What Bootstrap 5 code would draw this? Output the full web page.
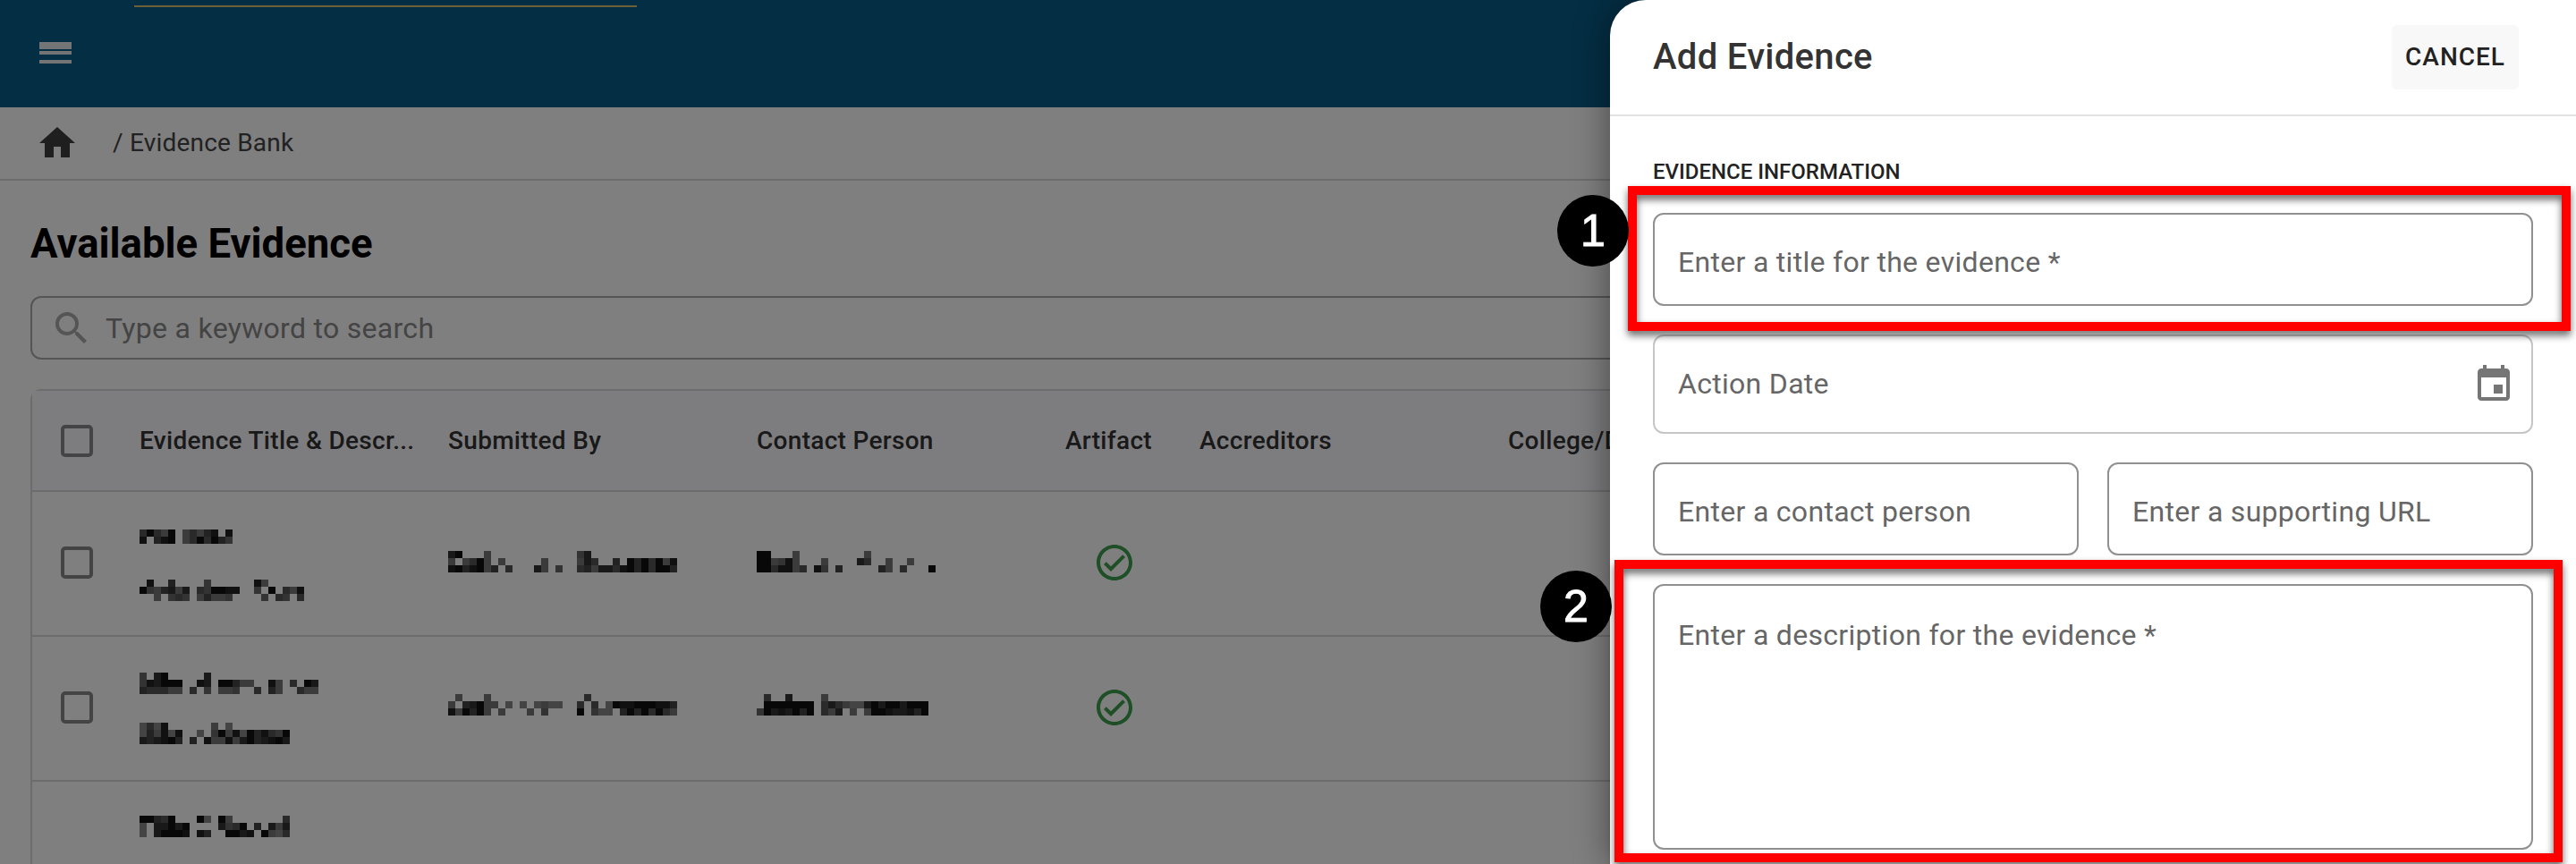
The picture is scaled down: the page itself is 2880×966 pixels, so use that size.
<!DOCTYPE html>
<html lang="en">
<head>
    <meta charset="UTF-8">
    <meta name="viewport" content="width=device-width, initial-scale=1.0">
    <title>Evidence Bank</title>

    <!-- BOOTSTRAP -->
    <link href="https://cdn.jsdelivr.net/npm/bootstrap@5.3.2/dist/css/bootstrap.min.css" rel="stylesheet">
    <style>
        html, body { height: 966px; overflow: hidden; }
        body { font-family: Roboto, "Liberation Sans", sans-serif; background: #fff; color: #444; }

        /* page under the drawer */
        .topbar { height: 120px; background: #095c88; }
        .topbar-line { width: 562px; height: 2px; margin: 6px 0 0 150px; background: #dac072; }
        .topbar-menu { margin: 27px 0 0 38px; fill: #e4e8ec; }
        .crumbs { height: 82px; padding-left: 40px; border-bottom: 2px solid #d9d9d9; font-size: 28px; letter-spacing: .2px; }
        .crumbs svg { fill: #3e3e3e; }
        .crumbs span { margin-left: 38px; }
        .page-body { padding: 0 34px; }
        .page-title { margin: 42px 0 0; font-size: 45.5px; font-weight: 700; color: #000; line-height: 58px; }
        .search-box { height: 71px; margin-top: 29px; padding-left: 20px; border: 2px solid #aaa; border-radius: 12px; font-size: 32px; letter-spacing: .3px; color: #888; }
        .search-box svg { fill: #aaa; }
        .search-box span { margin-left: 14px; }

        .evidence-card { margin-top: 33px; border: 2px solid #d9d9d9; border-radius: 12px 12px 0 0; }
        .evidence-table { table-layout: fixed; width: 2810px; margin: 0; color: #333; }
        .evidence-table th, .evidence-table td { padding: 0; background: transparent; border-bottom: 2px solid #d9d9d9; vertical-align: top; box-shadow: none; }
        .evidence-table thead th { height: 112px; vertical-align: middle; background: #fbfbff; font-size: 28px; font-weight: 500; letter-spacing: .3px; color: #333; }
        .evidence-table tbody td { height: 162px; }
        .head-title { overflow: hidden; white-space: nowrap; }
        .box-cell { padding-left: 32px !important; }
        .tick-box { display: block; width: 36px; height: 36px; border: 4px solid #888; border-radius: 5px; }
        .tick-cell { padding-left: 31px !important; }
        .tick-cell svg { fill: #3c9e4c; }
        .mosaic { display: block; }

        .evidence-table tbody .box-cell { padding-top: 61px; }
        .evidence-table tbody .tick-cell { padding-top: 55px; }
        .row-one .title-cell { padding-top: 42px; }
        .row-two .title-cell { padding-top: 40px; }
        .row-three .title-cell { padding-top: 38px; }
        .title-cell .mosaic + .mosaic { margin-top: 32px; }
        .row-one .first-line + .mosaic { margin-top: 40px; }
        .row-one .text-cell { padding-top: 66px; }
        .row-two .text-cell { padding-top: 64px; }

        .backdrop { position: absolute; inset: 0; background: rgba(0, 0, 0, .5); }

        /* drawer */
        .drawer { position: absolute; top: 0; right: 0; bottom: 0; width: 1080px; background: #fff; border-top-left-radius: 40px; box-shadow: 0 0 40px rgba(0, 0, 0, .45); }
        .drawer-head { height: 130px; padding: 0 64px 0 48px; border-bottom: 2px solid #e2e2e2; }
        .drawer-title { margin: 0; font-size: 40px; font-weight: 500; letter-spacing: .3px; color: #333; }
        .cancel-btn { width: 142px; height: 72px; padding: 0; background: #f8f8f8; border: 0; border-radius: 6px; font-size: 28px; font-weight: 500; letter-spacing: 1px; color: #222; }
        .drawer-body { padding: 50px 48px 0; }
        .drawer-label { margin-bottom: 34px; font-size: 24px; line-height: 24px; font-weight: 500; color: #222; }
        .drawer-form { gap: 32px; }
        .field { height: 104px; padding: 6px 26px 0; border: 2px solid #909090; border-radius: 12px; font-size: 32px; letter-spacing: .3px; color: #444; box-shadow: none; }
        .field::placeholder { color: #666; opacity: 1; }
        .field-date { height: 111px; padding: 0 26px 2px; border-color: #c6c6c6; }
        .field-long { height: 297px; padding-top: 31px; resize: none; }
        .field-pair { gap: 32px; }
        .date-icon { position: absolute; top: 32px; right: 20px; fill: #757575; }

        /* annotations on top of the screenshot */
        .callout { position: absolute; border: 10px solid #f00; filter: drop-shadow(0 5px 4px rgba(0, 0, 0, .6)); }
        .callout-one { left: 1820px; top: 208px; width: 1054px; height: 162px; }
        .callout-two { left: 1805px; top: 626px; width: 1060px; height: 338px; }
        .step { position: absolute; width: 80px; height: 80px; border-radius: 50%; background: #000; color: #fff; font-family: "Liberation Sans", Arial, sans-serif; font-size: 50px; -webkit-text-stroke: 1px #fff; }
        .step-one { left: 1741px; top: 218px; }
        .step-two { left: 1722px; top: 638px; }
    </style>
</head>
<body>
    <header class="topbar d-flex flex-column align-items-start">
        <div class="topbar-line"></div>
        <svg class="topbar-menu" width="48" height="48" viewBox="0 0 24 24"><path d="M3 18h18v-2H3v2zm0-5h18v-2H3v2zm0-5v2h18V6H3z"/></svg>
    </header>

    <nav class="crumbs d-flex align-items-center">
        <svg width="48" height="48" viewBox="0 0 24 24"><path d="M10 20v-6h4v6h5v-8h3L12 3 2 12h3v8z"/></svg>
        <span>/ Evidence Bank</span>
    </nav>

    <main class="page-body">
        <h1 class="page-title">Available Evidence</h1>

        <div class="search-box d-flex align-items-center">
            <svg width="48" height="48" viewBox="0 0 24 24"><path d="M15.5 14h-.79l-.28-.27A6.471 6.471 0 0 0 16 9.5 6.5 6.5 0 1 0 9.5 16c1.61 0 3.09-.59 4.23-1.57l.27.28v.79l5 4.99L20.49 19l-4.99-5zm-6 0C7.01 14 5 11.99 5 9.5S7.01 5 9.5 5 14 7.01 14 9.5 11.99 14 9.5 14z"/></svg>
            <span>Type a keyword to search</span>
        </div>

        <div class="evidence-card">
            <table class="table evidence-table">
                <colgroup>
                    <col style="width: 120px">
                    <col style="width: 345px">
                    <col style="width: 345px">
                    <col style="width: 345px">
                    <col style="width: 150px">
                    <col style="width: 345px">
                    <col style="width: 345px">
                    <col>
                </colgroup>
                <thead>
                    <tr>
                        <th class="box-cell"><span class="tick-box"></span></th>
                        <th class="head-title">Evidence Title &amp; Descr...</th>
                        <th>Submitted By</th>
                        <th>Contact Person</th>
                        <th>Artifact</th>
                        <th>Accreditors</th>
                        <th>College/Department</th>
                        <th></th>
                    </tr>
                </thead>
                <tbody>
                    <tr class="row-one">
                        <td class="box-cell"><span class="tick-box"></span></td>
                        <td class="title-cell">
                            <svg class="mosaic first-line" data-rows="5157 1.75742.2|2.421.7515146"></svg>
                            <svg class="mosaic" data-rows=".2..4....6......27.....|1674373.561122..6.1.572|..7.656.74776....6.56.5"></svg>
                        </td>
                        <td class="text-cell"><svg class="mosaic" data-rows="31...7............63............|7.7517.7.....7....735..4.1415172|2142174.5...37.6..54733521415114"></svg></td>
                        <td class="text-cell"><svg class="mosaic" data-rows="11...7.........7.........|117627...7....35..7..7...|1152275.26.4.....47.5...1"></svg></td>
                        <td class="tick-cell"><svg width="48" height="48" viewBox="0 0 24 24"><path d="M12 2C6.48 2 2 6.48 2 12s4.48 10 10 10 10-4.48 10-10S17.52 2 12 2zm0 18c-4.41 0-8-3.59-8-8s3.59-8 8-8 8 3.59 8 8-3.59 8-8 8zm4.59-12.42L10 14.17l-2.59-2.58L6 13l4 4 8-8z"/></svg></td>
                        <td></td><td></td><td></td>
                    </tr>
                    <tr class="row-two">
                        <td class="box-cell"><span class="tick-box"></span></td>
                        <td class="title-cell">
                            <svg class="mosaic" data-rows="6.31.....3...............|623111..23.11477..27.5.13|455577.5.6.776..5.47..577"></svg>
                            <svg class="mosaic" data-rows="8582......7.8........|847282..8.61728142561|343214.4.277273143213"></svg>
                        </td>
                        <td class="text-cell"><svg class="mosaic" data-rows=".7...7.............5............|7.43177.8.8.8788..5.5.8122111224|271417.7...7.6....1.688.41415157"></svg></td>
                        <td class="text-cell"><svg class="mosaic" data-rows=".5..3....7..............|.1111111.535788313113111|61323141.573.7.711233241"></svg></td>
                        <td class="tick-cell"><svg width="48" height="48" viewBox="0 0 24 24"><path d="M12 2C6.48 2 2 6.48 2 12s4.48 10 10 10 10-4.48 10-10S17.52 2 12 2zm0 18c-4.41 0-8-3.59-8-8s3.59-8 8-8 8 3.59 8 8-3.59 8-8 8zm4.59-12.42L10 14.17l-2.59-2.58L6 13l4 4 8-8z"/></svg></td>
                        <td></td><td></td><td></td>
                    </tr>
                    <tr class="row-three">
                        <td></td>
                        <td class="title-cell"><svg class="mosaic" data-rows="11451...18.17.......5|8.33131....3651.4.373|8.31112.24..1132.1785"></svg></td>
                        <td></td><td></td><td></td><td></td><td></td><td></td>
                    </tr>
                </tbody>
            </table>
        </div>
    </main>

    <div class="backdrop"></div>

    <!-- DRAWER -->
    <aside class="drawer">
        <div class="drawer-head d-flex align-items-center justify-content-between">
            <h2 class="drawer-title">Add Evidence</h2>
            <button type="button" class="btn cancel-btn">CANCEL</button>
        </div>
        <div class="drawer-body">
            <div class="drawer-label">EVIDENCE INFORMATION</div>
            <form class="drawer-form d-flex flex-column">
                <input type="text" class="form-control field" placeholder="Enter a title for the evidence *">
                <div class="position-relative">
                    <input type="text" class="form-control field field-date" placeholder="Action Date">
                    <svg class="date-icon" width="48" height="48" viewBox="0 0 24 24"><path d="M17 12h-5v5h5v-5zM16 1v2H8V1H6v2H5c-1.11 0-1.99.9-1.99 2L3 19c0 1.1.89 2 2 2h14c1.1 0 2-.9 2-2V5c0-1.1-.9-2-2-2h-1V1h-2zm3 18H5V8h14v11z"/></svg>
                </div>
                <div class="d-flex field-pair">
                    <input type="text" class="form-control field" placeholder="Enter a contact person">
                    <input type="text" class="form-control field" placeholder="Enter a supporting URL">
                </div>
                <textarea class="form-control field field-long" placeholder="Enter a description for the evidence *"></textarea>
            </form>
        </div>
    </aside>

    <!-- ANNOTATIONS -->
    <div class="callout callout-one"></div>
    <div class="callout callout-two"></div>
    <div class="step step-one d-flex align-items-center justify-content-center">1</div>
    <div class="step step-two d-flex align-items-center justify-content-center">2</div>

    <script src="https://cdn.jsdelivr.net/npm/bootstrap@5.3.2/dist/js/bootstrap.bundle.min.js"></script>
    <script>
        // Blurred-out names: each digit is a grey level for one 8px block
        document.querySelectorAll(".mosaic").forEach(function(svg){
            const rows = svg.dataset.rows.replace(/ /g, "").split("|");
            let cols = 0;
            let html = "";
            rows.forEach(function(row, y){
                cols = Math.max(cols, row.length);
                row.split("").forEach(function(c, x){
                    if(c !== "."){
                        html += '<rect x="' + x * 8 + '" y="' + y * 8 + '" width="8" height="8" fill="#' + c + c + c + '"/>';
                    }
                });
            });
            svg.setAttribute("width", cols * 8);
            svg.setAttribute("height", rows.length * 8);
            svg.innerHTML = html;
        });
    </script>
</body>
</html>
